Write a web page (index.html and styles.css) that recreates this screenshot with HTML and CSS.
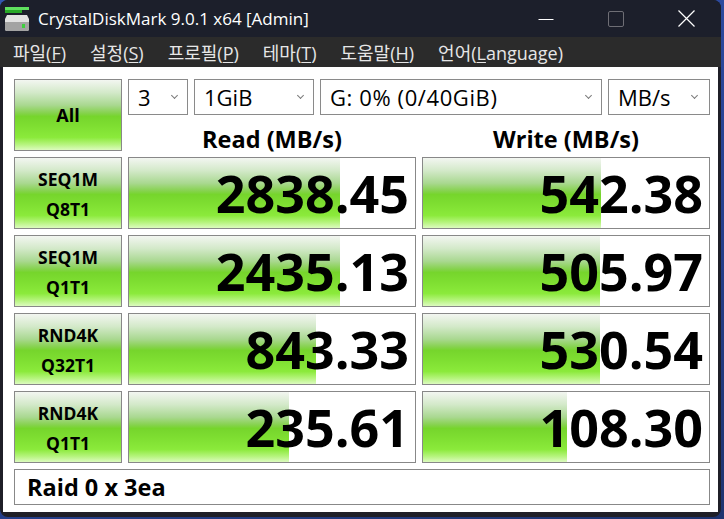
FILE: index.html
```html
<!DOCTYPE html>
<html>
<head>
<meta charset="utf-8">
<link rel="stylesheet" href="styles.css">
</head>
<body>
<div class="window">
  <div class="titlebar">
    <svg class="app-icon" width="24" height="24" viewBox="0 0 24 24">
      <rect x="0" y="0" width="24" height="3" fill="#5fe05f"/>
      <rect x="0" y="3" width="17" height="3" fill="#28a828"/>
      <path d="M2 8 H22 L24 12 V22 Q24 24 22 24 H2 Q0 24 0 22 V12 Z" fill="#e2e2e2"/>
      <path d="M0 15 H24 V22 Q24 24 22 24 H2 Q0 24 0 22 Z" fill="#a3a3a3"/>
      <rect x="17" y="17" width="3" height="4" fill="#3ecf3e"/>
    </svg>
    <div class="title">CrystalDiskMark 9.0.1 x64 [Admin]</div>
    <div class="controls">
      <div class="ctl"><svg width="16" height="16" viewBox="0 0 16 16"><path d="M0.5 8.5 H15.5" stroke="#fff" stroke-width="1"/></svg></div>
      <div class="ctl"><svg width="16" height="16" viewBox="0 0 16 16"><rect x="0.5" y="0.5" width="15" height="15" rx="1.5" fill="none" stroke="#6e6e75" stroke-width="1"/></svg></div>
      <div class="ctl"><svg width="17" height="17" viewBox="0 0 17 17"><path d="M0.5 0.5 L16.5 16.5 M16.5 0.5 L0.5 16.5" stroke="#fff" stroke-width="1.2"/></svg></div>
    </div>
  </div>
  <div class="menubar">
    <span class="mi">파일(<u>F</u>)</span>
    <span class="mi">설정(<u>S</u>)</span>
    <span class="mi">프로필(<u>P</u>)</span>
    <span class="mi">테마(<u>T</u>)</span>
    <span class="mi">도움말(<u>H</u>)</span>
    <span class="mi">언어(<u>L</u>anguage)</span>
  </div>
  <div class="client">
    <div class="top">
      <div class="btn all">All</div>
      <div class="topright">
        <div class="combos">
          <div class="combo c1"><span>3</span><span class="chev"></span></div>
          <div class="combo c2"><span>1GiB</span><span class="chev"></span></div>
          <div class="combo c3"><span class="wide">G: 0% (0/40GiB)</span><span class="chev"></span></div>
          <div class="combo c4"><span>MB/s</span><span class="chev"></span></div>
        </div>
        <div class="heads">
          <div class="head">Read (MB/s)</div>
          <div class="head">Write (MB/s)</div>
        </div>
      </div>
    </div>
    <div class="row">
      <div class="btn label"><span>SEQ1M</span><span>Q8T1</span></div>
      <div class="val" style="background-size: 211px 100%">2838.45</div>
      <div class="val" style="background-size: 178px 100%">542.38</div>
    </div>
    <div class="row">
      <div class="btn label"><span>SEQ1M</span><span>Q1T1</span></div>
      <div class="val" style="background-size: 211px 100%">2435.13</div>
      <div class="val" style="background-size: 177px 100%">505.97</div>
    </div>
    <div class="row">
      <div class="btn label"><span>RND4K</span><span>Q32T1</span></div>
      <div class="val" style="background-size: 187px 100%">843.33</div>
      <div class="val" style="background-size: 177px 100%">530.54</div>
    </div>
    <div class="row">
      <div class="btn label"><span>RND4K</span><span>Q1T1</span></div>
      <div class="val" style="background-size: 160px 100%">235.61</div>
      <div class="val" style="background-size: 144px 100%">108.30</div>
    </div>
    <div class="comment">Raid 0 x 3ea</div>
  </div>
</div>
</body>
</html>
```

FILE: styles.css
```css
* { box-sizing: border-box; }
html, body { margin: 0; padding: 0; }
body {
  width: 724px;
  height: 519px;
  overflow: hidden;
  background: linear-gradient(160deg, #3456b0 0%, #26408f 60%, #1e336f 100%);
  font-family: "Open Sans", "Noto Sans CJK KR", sans-serif;
}
.window {
  width: 721px;
  height: 517px;
  background: #1f1f27;
  border-radius: 8px;
  overflow: hidden;
  display: flex;
  flex-direction: column;
}
.titlebar {
  height: 37px;
  flex: none;
  background: #1c1f2b;
  display: flex;
  align-items: center;
  color: #fff;
}
.app-icon { margin-left: 5px; flex: none; }
.title { margin-left: 9px; font-size: 17px; white-space: nowrap; }
.controls { margin-left: auto; display: flex; }
.ctl {
  width: 70px;
  height: 37px;
  display: flex;
  align-items: center;
  justify-content: center;
}
.menubar {
  height: 30px;
  flex: none;
  background: #2b2b2b;
  display: flex;
  align-items: center;
  gap: 24px;
  padding-left: 13px;
  color: #e6e6e6;
  font-size: 18px;
  white-space: nowrap;
}
.menubar u { text-decoration-thickness: 1px; text-underline-offset: 2px; }
.client {
  flex: 1;
  background: #fff;
  margin: 0 3px 5px;
  padding: 12px 0 0 11px;
}
.top { display: flex; gap: 6px; }
.btn {
  border: 1px solid #888;
  background: linear-gradient(to bottom, #f3f6f1 0%, #d3e9c9 18%, #a9d890 36%, #86d24e 47%, #76d52c 52%, #7ede31 65%, #8bea3b 82%, #b6f47e 92%, #dcfbbf 100%);
  display: flex;
  flex-direction: column;
  align-items: center;
  justify-content: center;
  font-weight: 700;
  color: #000;
}
.all { width: 108px; height: 72px; font-size: 18px; }
.topright { width: 582px; display: flex; flex-direction: column; }
.combos { display: flex; gap: 6px; height: 36px; }
.combo {
  border: 1px solid #8a8a8a;
  display: flex;
  align-items: center;
  justify-content: space-between;
  padding: 0 10px 0 9px;
  font-size: 22px;
  color: #000;
  white-space: nowrap;
}
.combo .wide { letter-spacing: 0.6px; }
.c1 { width: 60px; }
.c2 { width: 120px; }
.c3 { width: 282px; }
.c4 { width: 102px; padding-right: 12px; }
.chev {
  width: 5px;
  height: 5px;
  border-right: 1px solid #7a7a7a;
  border-bottom: 1px solid #7a7a7a;
  transform: rotate(45deg);
  margin-top: -3px;
}
.heads { display: flex; gap: 6px; height: 36px; }
.head {
  width: 288px;
  text-align: center;
  font-weight: 700;
  font-size: 23.5px;
  line-height: 32px;
  color: #000;
  padding-top: 8px;
}
.row { display: flex; gap: 6px; margin-top: 6px; height: 72px; }
.label { width: 108px; font-size: 17.5px; line-height: 30px; padding-top: 1px; }
.val {
  width: 288px;
  border: 1px solid #888;
  background-color: #fff;
  background-image: linear-gradient(to bottom, #f3f6f1 0%, #d3e9c9 18%, #a9d890 36%, #86d24e 47%, #76d52c 52%, #7ede31 65%, #8bea3b 82%, #b6f47e 92%, #dcfbbf 100%);
  background-repeat: no-repeat;
  display: flex;
  align-items: center;
  justify-content: flex-end;
  padding-right: 6px;
  padding-bottom: 2px;
  font-weight: 700;
  font-size: 52px;
  color: #000;
}
.comment {
  margin-top: 6px;
  width: 696px;
  height: 36px;
  border: 1px solid #888;
  display: flex;
  align-items: center;
  padding-left: 12px;
  font-weight: 700;
  font-size: 23.5px;
  color: #000;
}
```
